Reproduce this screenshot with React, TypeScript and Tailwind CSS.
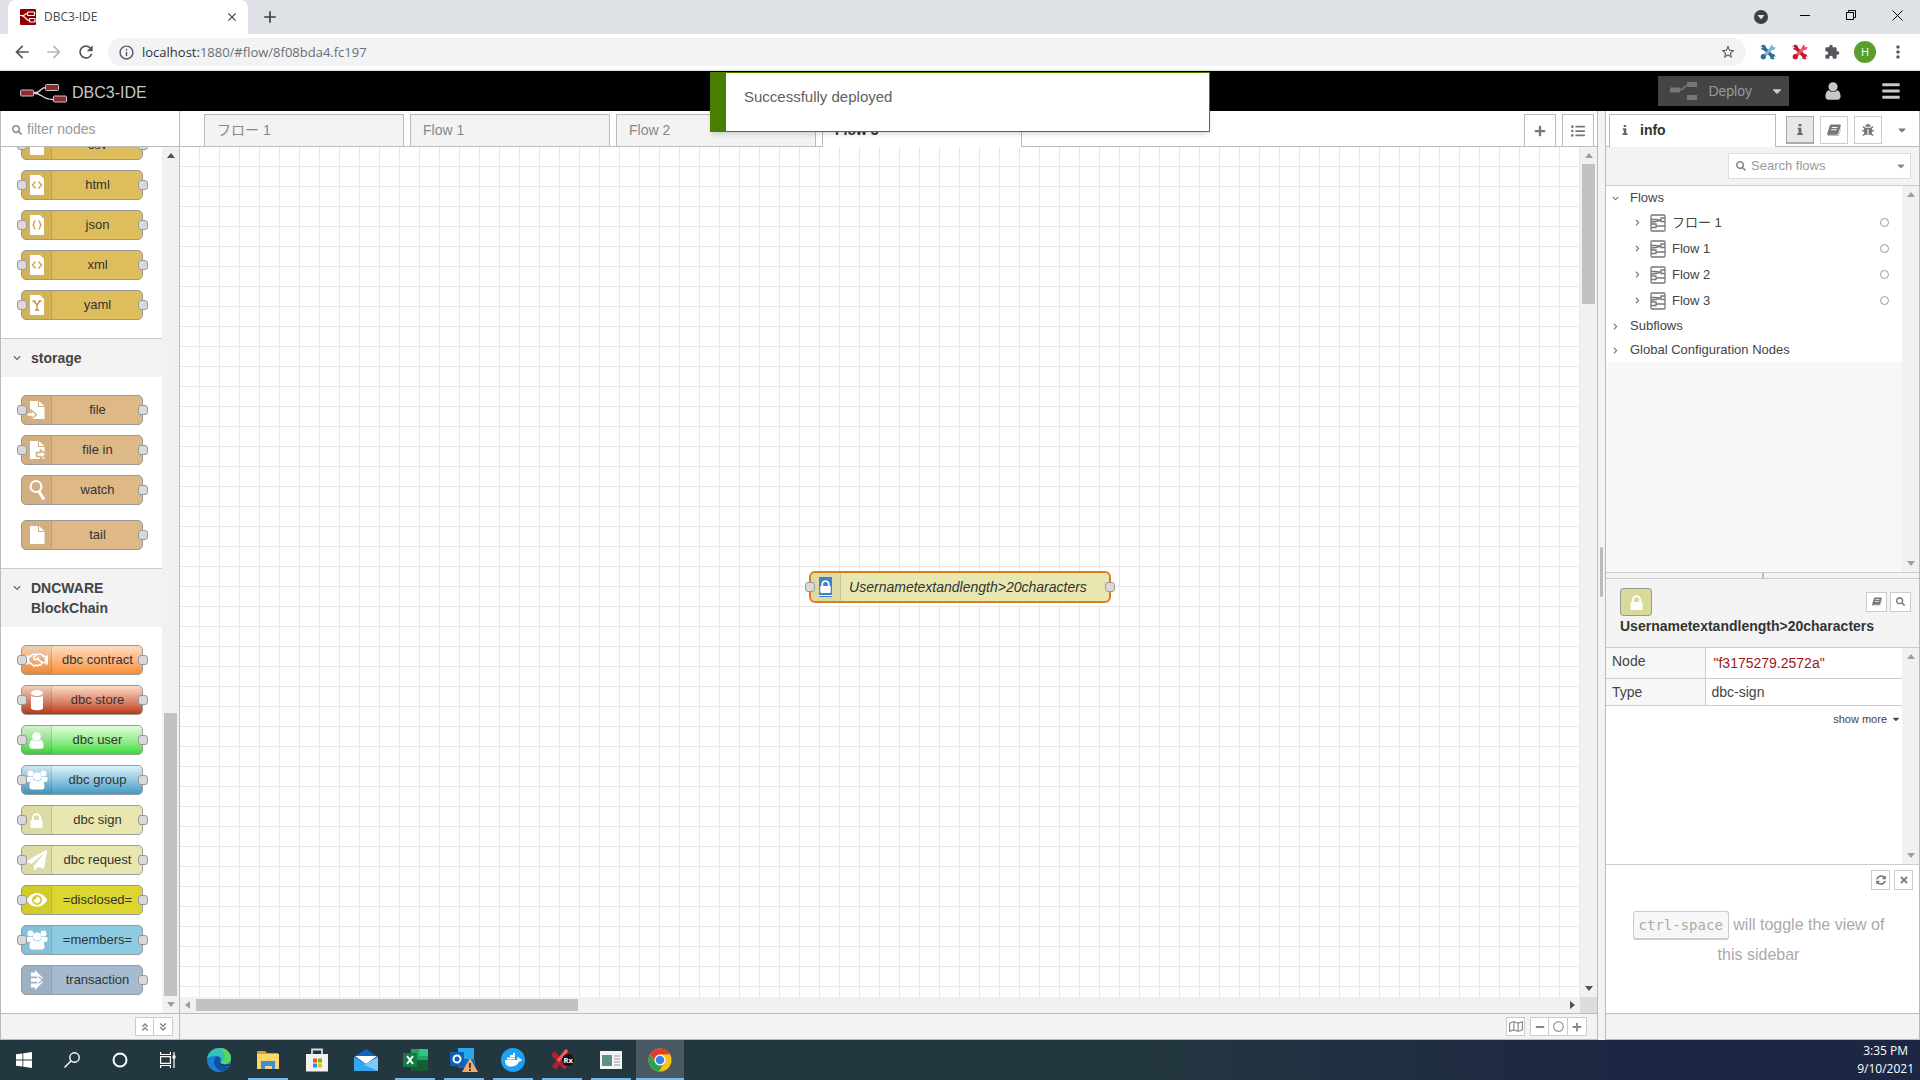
import React from "react";
import {
  FaBug, FaCaretDown, FaChevronDown, FaChevronRight, FaEye,
  FaListUl, FaMinus, FaPaperPlane, FaPlus, FaRegHandshake, FaRegMap, FaSearch, FaSyncAlt,
  FaTimes, FaAngleDoubleDown, FaAngleDoubleUp, FaBars, FaRegCircle,
} from "react-icons/fa";
import { MdArrowBack, MdArrowForward, MdRefresh, MdStarBorder, MdMoreVert, MdClose, MdAdd, MdInfoOutline, MdExtension } from "react-icons/md";

const sans = "font-['Liberation_Sans','Noto_Sans_CJK_JP',sans-serif]";
const ui = "font-['Open_Sans','Noto_Sans',sans-serif]";

/* ---------- shared glyphs ---------- */

function Lock({ className }: { className?: string }) {
  return (
    <svg viewBox="0 0 1152 1536" className={className} fill="currentColor">
      <path d="M320 768h512v-192q0-106-75-181t-181-75-181 75-75 181v192zm832 96v576q0 40-28 68t-68 28h-960q-40 0-68-28t-28-68v-576q0-40 28-68t68-28h32v-192q0-184 132-316t316-132 316 132 132 316v192h32q40 0 68 28t28 68z" />
    </svg>
  );
}

function Person({ className }: { className?: string }) {
  return (
    <svg viewBox="0 0 16 18" className={className} fill="currentColor">
      <circle cx="8" cy="4.8" r="4.6" />
      <path d="M4 8.2C1.4 8.6.4 11.6.4 14.6c0 2 1.2 3.2 3 3.2h9.2c1.8 0 3-1.2 3-3.2 0-3-1-6-3.6-6.4C11 9.300 9.600 9.900 8 9.900S5 9.300 4 8.200z" />
    </svg>
  );
}

function InfoGlyph({ className }: { className?: string }) {
  return (
    <svg viewBox="0 0 6 12" className={className} fill="currentColor">
      <path d="M1.500 0h3v2.500h-3zM.5 4h4v6H6v2H0v-2h1.500V6H.5z" />
    </svg>
  );
}

function Book({ className }: { className?: string }) {
  return (
    <svg viewBox="0 0 14 12" className={className} fill="currentColor">
      <path d="M4.500.5h8.200c.8 0 1.200.6 1 1.400l-2.300 7.600c-.2.800-.8 1.200-1.500 1.200H2.300c-.6 0-.9.300-.9.300s.3.500 1 .5h8.200c.7 0 1.200-.3 1.400-1L14 4v1l-1.800 6c-.3.700-.9 1-1.600 1H2.300C.8 12-.1 10.700.3 9.500L2.600 2C2.900 1 3.600.5 4.500.5zM5 3l-.3 1h5.600l.3-1zM4.300 5.200 4 6.200h5.600l.3-1z" fillRule="evenodd" />
    </svg>
  );
}

function Arrow({ dir, className }: { dir: "up" | "down" | "left" | "right"; className?: string }) {
  const d = { up: "M0 6 4 1l4 5z", down: "M0 2l4 5 4-5z", left: "M6 0 1 4l5 4z", right: "M2 0l5 4-5 4z" }[dir];
  return (
    <svg viewBox="0 0 8 8" className={"h-2 w-2 shrink-0 " + (className ?? "text-[#a0a0a0]")} fill="currentColor">
      <path d={d} />
    </svg>
  );
}

function FlowGlyph() {
  return (
    <svg viewBox="0 0 16 18" className="h-[18px] w-4 shrink-0" fill="none" stroke="#777" strokeWidth="1.300">
      <rect x="1" y="1" width="14" height="16" rx="1" />
      <path d="M15 4h-4v3.500h4M1 10h5v3.500H1M1 5.500h3.500C8 5.500 7 6 10.500 6M6.500 12H15M1 8c5 0 5-.5 9-1.500" />
    </svg>
  );
}

/* ---------- browser ---------- */

function Cross({ a, b }: { a: string; b: string }) {
  return (
    <svg viewBox="0 0 16 16" className="h-4 w-4">
      <path d="M4 4 12 12" stroke={a} strokeWidth="3.500" />
      <path d="M12 4 4 12" stroke={b} strokeWidth="3" />
      <g fill={a}><circle cx="3.300" cy="3.300" r="2.600" /><circle cx="12.700" cy="12.700" r="2.600" /></g>
      <g fill={b}><circle cx="12.700" cy="3.300" r="2.600" /></g>
      <circle cx="3.300" cy="12.700" r="2.600" fill={a} />
      <g fill="#fff"><circle cx="14" cy="1.700" r="1.500" /><circle cx="1.500" cy="3.500" r="1" /><circle cx="14.500" cy="13.500" r="1" /></g>
    </svg>
  );
}

function Browser() {
  return (
    <div className={ui}>
      <div className="flex h-[34px] bg-[#dee1e6]">
        <div className="ml-2 flex w-60 items-center rounded-t-lg bg-white pr-[9px] pl-3 text-[12px] text-[#45494d]">
          <svg viewBox="0 0 16 16" className="mr-2 h-4 w-4">
            <rect width="16" height="16" rx="1" fill="#8f0000" />
            <g fill="none" stroke="#fff" strokeWidth="1.200">
              <rect x="7.500" y="3" width="7" height="3.500" rx=".8" />
              <rect x="9.500" y="9.500" width="5.500" height="3.500" rx=".8" />
              <path d="M0 6.500h2c3 0 3-2 5.500-2M2 7c4 0 3 4.500 7.500 4.500" />
            </g>
          </svg>
          <span className="flex-1">DBC3-IDE</span>
          <button aria-label="Close tab"><MdClose className="h-[14px] w-[14px] text-[#3c4043]" /></button>
        </div>
        <button aria-label="New tab" className="ml-3 text-[#3c4043]"><MdAdd className="h-5 w-5" /></button>
        <div className="ml-auto flex items-center pb-1">
          <svg viewBox="0 0 14 14" className="mr-6 mt-1 h-[14px] w-[14px]"><circle cx="7" cy="7" r="7" fill="#3c4043" /><path d="M3.500 5h7L7 9.500z" fill="#dee1e6" /></svg>
          <button aria-label="Minimize" className="mx-2"><svg viewBox="0 0 10 10" className="h-[10px] w-[10px]"><path d="M0 5.500h10" stroke="#000" /></svg></button>
          <button aria-label="Restore" className="mx-7"><svg viewBox="0 0 10 10" className="h-[10px] w-[10px]" fill="none" stroke="#000"><path d="M.5 2.500h7v7h-7zM2.500 2.500v-2h7v7h-2" /></svg></button>
          <button aria-label="Close" className="mr-[17px] ml-2"><svg viewBox="0 0 11 11" className="h-[11px] w-[11px]" stroke="#000"><path d="m.5.5 10 10M10.500.5l-10 10" /></svg></button>
        </div>
      </div>
      <div className="flex h-[37px] items-center border-b border-[#dcdcdc] bg-white pl-3 text-[#54585c]">
        <button aria-label="Back"><MdArrowBack className="h-5 w-5" /></button>
        <button aria-label="Forward" className="ml-3"><MdArrowForward className="h-5 w-5 text-[#b5b7ba]" /></button>
        <button aria-label="Reload" className="ml-3"><MdRefresh className="h-5 w-5" /></button>
        <div className="ml-3 flex h-7 flex-1 items-center rounded-full bg-[#f1f3f4] px-2">
          <MdInfoOutline className="ml-[2px] h-[17px] w-[17px]" />
          <span className="ml-[7px] flex-1 pt-px text-[13px] text-[#6b6f73]"><span className="text-[#303134]">localhost:</span>1880/#flow/8f08bda4.fc197</span>
          <button aria-label="Bookmark"><MdStarBorder className="mr-[2px] h-4 w-4" /></button>
        </div>
        <div className="mr-3 ml-[14px] flex items-center">
          <Cross a="#2f6d92" b="#79b4cc" />
          <span className="ml-4 flex"><Cross a="#c3152b" b="#e5525c" /></span>
          <MdExtension className="ml-4 h-4 w-4" />
          <span className="ml-[14px] flex h-[22px] w-[22px] items-center justify-center rounded-full bg-[#5a9e2c] text-[11px] text-white">H</span>
          <button aria-label="Menu" className="ml-3"><MdMoreVert className="h-5 w-5" /></button>
        </div>
      </div>
    </div>
  );
}

/* ---------- header ---------- */

function Header() {
  return (
    <header className="relative flex h-10 shrink-0 items-center bg-black">
      <svg viewBox="0 0 48 20" className="mt-1 ml-5 h-5 w-12" fill="none">
        <path d="M13 10c9 0 6-5.500 13-5.500M13 10c10 0 8 6.500 20 6.500" stroke="#ddd" strokeWidth="1.300" />
        <g fill="#8f2b2e" stroke="#c9c9c9">
          <rect x=".6" y="7" width="13" height="6" rx="1" />
          <rect x="25.500" y="1.500" width="13" height="6" rx="1" />
          <rect x="33.500" y="13" width="13" height="6" rx="1" />
        </g>
      </svg>
      <h1 className="mt-1 ml-1 text-[16px] text-[#c7c7c7]">DBC3-IDE</h1>
      <button className="ml-auto flex h-[30px] items-center bg-[#444] pl-3 text-[14px] text-[#999]">
        <svg viewBox="0 0 28 20" className="mr-[10px] h-5 w-7" fill="#777">
          <path d="M9 9c7 0 4-5 9-5" stroke="#777" strokeWidth="1.500" fill="none" />
          <rect y="6.500" width="10" height="5" /><rect x="17" y="1" width="10" height="5" /><rect x="17" y="14" width="10" height="5" />
        </svg>
        Deploy
      </button>
      <button aria-label="Deploy options" className="flex h-[30px] w-[37px] items-center justify-end bg-[#444] pr-1 text-[#ccc]"><FaCaretDown className="h-[14px] w-4" /></button>
      <button aria-label="User" className="ml-9 text-[#c7c7c7]"><Person className="h-[18px] w-4" /></button>
      <button aria-label="Main menu" className="mr-[19px] ml-10 text-[#c7c7c7]"><FaBars className="h-5 w-5" /></button>
      <div role="status" className="absolute top-[1px] left-1/2 z-20 h-[60px] w-[500px] -translate-x-1/2 border border-l-[16px] border-[#487f00] bg-white px-[18px] pt-[13px] text-[15px] text-[#5f5f5f] shadow-md">
        Successfully deployed
      </div>
    </header>
  );
}

/* ---------- palette ---------- */

type Kind = { label: string; tint: string; icon: React.ReactNode; input?: boolean; top?: string };

const sheet = (glyph: React.ReactNode) => (
  <svg viewBox="0 0 16 22" className="h-[22px] w-4" fill="none">
    <path d="M1 1h10l4 4v16H1z" fill="#fff" />
    {glyph}
  </svg>
);
const angle = sheet(<path d="M6.500 7.500 3.500 11l3 3.500m3-7 3 3.500-3 3.500" stroke="#c9a64c" strokeWidth="1.400" />);
const brace = sheet(<path d="M6.500 7c-2.500 0-.5 3.500-2.800 4 2.300.5.3 4 2.800 4m3-8c2.500 0 .5 3.500 2.800 4-2.300.5-.3 4-2.800 4" stroke="#d9924c" strokeWidth="1.300" />);
const wye = sheet(<path d="M3.500 7h3m3 0h3M5 7l3 4 3-4m-3 4v5m-2 0h4" stroke="#c98a3c" strokeWidth="1.300" />);
const page = (glyph?: React.ReactNode) => (
  <svg viewBox="0 0 20 20" className="h-5 w-5">
    <path d="M3 1h8v6h6.500v12H3zM12 1l5.500 5H12z" fill="#fff" />
    {glyph}
  </svg>
);
const group = (
  <svg viewBox="0 0 22 20" className="h-5 w-[22px]" fill="#fff">
    <circle cx="4.500" cy="3.500" r="3" /><circle cx="17.500" cy="3.500" r="3" />
    <path d="M1 7h6v5H2.500C1 12 .3 10.500.3 9zM21 7h-6v5h4.500c1.500 0 2.200-1.500 2.200-3z" />
    <circle cx="11" cy="6.500" r="4" />
    <path d="M7.500 10C4.500 10 3.500 13.500 3.500 17c0 1.500 1 2.500 2.500 2.500h10c1.500 0 2.500-1 2.500-2.500 0-3.500-1-7-4-7-2 1.500-5 1.500-7 0z" />
  </svg>
);

const parsers: Kind[] = [
  { label: "csv", tint: "bg-[#debd5c]", icon: sheet(null), input: true },
  { label: "html", tint: "bg-[#debd5c]", icon: angle, input: true },
  { label: "json", tint: "bg-[#debd5c]", icon: brace, input: true },
  { label: "xml", tint: "bg-[#debd5c]", icon: angle, input: true },
  { label: "yaml", tint: "bg-[#debd5c]", icon: wye, input: true },
];
const storage: Kind[] = [
  { label: "file", tint: "bg-[#deb887]", input: true, icon: page(<path d="M0 12.500h4V10l5.500 4.500L4 19v-2.500H0z" fill="#fff" stroke="#d3ad7d" strokeWidth="1.500" />) },
  { label: "file in", tint: "bg-[#deb887]", input: true, icon: page(<path d="M9.500 12.500h4V10l5.500 4.500-5.500 4.500v-2.500h-4z" fill="#fff" stroke="#d3ad7d" strokeWidth="1.500" />) },
  { label: "watch", tint: "bg-[#deb887]", icon: <svg viewBox="0 0 18 22" className="h-[22px] w-[18px]" fill="none" stroke="#fff"><circle cx="8" cy="7.500" r="5.500" strokeWidth="2" /><path d="m11 12.500 5 8" strokeWidth="3" /></svg> },
  { label: "tail", tint: "bg-[#deb887]", icon: page(), top: "mt-[5px]" },
];
const chain: Kind[] = [
  { label: "dbc contract", tint: "bg-linear-to-b from-[#fbdcc0] to-[#f88f30]", input: true, icon: <FaRegHandshake className="h-[22px] w-[22px]" /> },
  { label: "dbc store", tint: "bg-linear-to-b from-[#fadcc8] to-[#b93a16]", input: true, icon: <svg viewBox="0 0 14 22" className="h-[22px] w-[14px]" fill="#fff"><ellipse cx="7" cy="4" rx="6" ry="3" /><path d="M1 6.500c2 2 10 2 12 0V19c0 3-12 3-12 0z" /></svg> },
  { label: "dbc user", tint: "bg-linear-to-b from-[#e0fddc] to-[#32dc32]", input: true, icon: <Person className="h-[17px] w-[15px]" /> },
  { label: "dbc group", tint: "bg-linear-to-b from-[#dcf4fc] to-[#3c9cc4]", input: true, icon: group },
  { label: "dbc sign", tint: "bg-[#e8e7af]", input: true, icon: <Lock className="h-4 w-[13px]" /> },
  { label: "dbc request", tint: "bg-[#e8e7af]", input: true, icon: <FaPaperPlane className="h-5 w-5" /> },
  { label: "=disclosed=", tint: "bg-[#ded630]", input: true, icon: <FaEye className="h-5 w-5" /> },
  { label: "=members=", tint: "bg-[#8ccbe2]", input: true, icon: group },
  { label: "transaction", tint: "bg-[#a6bbcf]", icon: <svg viewBox="0 0 14 20" className="h-5 w-[14px]" fill="#fff"><path d="M1 8.200h6v3.600H1zM1 2.500h4V0l7.500 7.500V9L9 6.500H1zM1 17.500h4V20l7.500-7.500V11L9 13.500H1zM7 6l4.500 4L7 14z" /></svg> },
];

const port = "absolute h-[10px] w-[10px] rounded-[3px] border border-[#999] bg-[#d9d9d9]";

function PaletteNode({ kind }: { kind: Kind }) {
  return (
    <div className={"relative mr-[19px] ml-5 flex h-[30px] shrink-0 cursor-move rounded-[5px] border border-[#999] " + kind.tint + " " + (kind.top ?? "")}>
      <span className="flex w-[30px] shrink-0 items-center justify-center rounded-l-[4px] border-r border-black/10 bg-black/5 text-white">{kind.icon}</span>
      <span className="flex flex-1 items-center justify-center whitespace-nowrap pl-px text-[13px] text-[#333]">{kind.label}</span>
      {kind.input && <i className={port + " top-[9px] -left-[5px]"} />}
      <i className={port + " top-[9px] -right-[6px]"} />
    </div>
  );
}

function Category({ title, kinds }: { title: string; kinds: Kind[] }) {
  return (
    <section className="border-t border-[#ccc]">
      <button className="flex w-full items-start bg-[#f3f3f3] py-[9px] pl-3 text-left text-[14px] leading-5 font-bold text-[#444]">
        <FaChevronDown className="mt-[6px] mr-[10px] h-2 w-2 shrink-0 text-[#666]" />
        <span className="w-24">{title}</span>
      </button>
      <div className="flex flex-col gap-[10px] pt-[18px] pb-[18px]">
        {kinds.map((k) => <PaletteNode key={k.label} kind={k} />)}
      </div>
    </section>
  );
}

function Palette() {
  return (
    <aside className="flex w-[180px] shrink-0 flex-col border-x border-[#bbb] bg-white">
      <label className="flex h-9 shrink-0 items-center border-b border-[#bbb] pt-[2px] pl-[11px] text-[#888]">
        <FaSearch className="mr-[5px] h-[10px] w-[10px]" />
        <input placeholder="filter nodes" className="w-32 text-[14px] outline-none placeholder:text-[#999]" />
      </label>
      <div className="flex min-h-0 flex-1">
        <div className="min-w-0 flex-1 overflow-hidden">
          <div className="-mt-[17px] flex flex-col gap-[10px] pb-[18px]">
            {parsers.map((k) => <PaletteNode key={k.label} kind={k} />)}
          </div>
          <Category title="storage" kinds={storage} />
          <Category title="DNCWARE BlockChain" kinds={chain} />
        </div>
        <div className="flex w-[17px] flex-col items-center bg-[#f1f1f1] py-[5px]">
          <Arrow dir="up" className="text-[#505050]" />
          <div className="flex-[554]" />
          <div className="w-[13px] flex-[284] bg-[#c1c1c1]" />
          <Arrow dir="down" className="mt-1 text-[#a0a0a0]" />
        </div>
      </div>
      <footer className="flex h-[27px] shrink-0 items-center justify-end border-y border-[#bbb] bg-[#f3f3f3] pr-[6px]">
        <button aria-label="Collapse all" className="flex h-[19px] w-[19px] items-center justify-center border border-[#ccc] bg-white text-[#888]"><FaAngleDoubleUp className="h-[10px] w-[10px]" /></button>
        <button aria-label="Expand all" className="-ml-px flex h-[19px] w-5 items-center justify-center border border-[#ccc] bg-white text-[#888]"><FaAngleDoubleDown className="h-[10px] w-[10px]" /></button>
      </footer>
    </aside>
  );
}

/* ---------- workspace ---------- */

const flows = ["フロー 1", "Flow 1", "Flow 2", "Flow 3"];
const tool = "flex h-[19px] items-center justify-center border border-[#ccc] bg-white text-[#888]";

function Workspace() {
  return (
    <main className="flex min-w-0 flex-1 flex-col border-r border-[#bbb] bg-white">
      <nav className="flex h-9 shrink-0 items-end border-b border-[#bbb] pl-6">
        {flows.map((f, i) => (
          <button
            key={f}
            className={"mr-[6px] h-8 w-[200px] border border-b-0 border-[#bbb] px-3 text-left text-[14px] " +
              (i === 3 ? "-mb-px h-[33px] bg-white pb-px font-bold text-[#333]" : "bg-[#f3f3f3] text-[#888]")}
          >
            {f}
          </button>
        ))}
        <button aria-label="Add flow" className="ml-auto flex h-8 w-8 items-center justify-center border border-b-0 border-[#bbb] text-[#777]"><FaPlus className="h-3 w-3" /></button>
        <button aria-label="List flows" className="mr-[3px] ml-[6px] flex h-8 w-8 items-center justify-center border border-b-0 border-[#bbb] text-[#777]"><FaListUl className="h-[14px] w-[14px]" /></button>
      </nav>
      <div className="flex min-h-0 flex-1">
        <div className="flex min-w-0 flex-1 flex-col">
          <div className="relative flex-1 overflow-hidden bg-[linear-gradient(to_left,#e9e9e9_1px,transparent_1px),linear-gradient(to_top,#e9e9e9_1px,transparent_1px)] bg-size-[20px_20px]">
            <div className="absolute top-[424px] left-[629px] flex h-8 w-[302px] items-center rounded-[6px] border-2 border-[#e07b20] bg-[#e8e7af]">
              <span className="flex h-full w-[30px] items-center justify-center rounded-l-[4px] border-r border-black/10 bg-black/5 text-white">
                <span className="flex h-5 w-[13px] flex-col items-center justify-between bg-[#3f7fd0] pt-[2px]"><Lock className="h-[14px] w-[11px]" /><i className="h-[2px] w-full border-t border-white" /></span>
              </span>
              <span className="flex-1 pr-[14px] text-center text-[14px] text-[#333] italic">Usernametextandlength&gt;20characters</span>
              <i className={port + " top-[9px] -left-[6px]"} />
              <i className={port + " top-[9px] -right-[6px]"} />
            </div>
          </div>
          <div className="flex h-4 shrink-0 items-center bg-[#f1f1f1] px-1">
            <Arrow dir="left" />
            <div className="ml-1 h-3 flex-[382] bg-[#c1c1c1]" />
            <div className="flex-[990]" />
            <Arrow dir="right" className="text-[#505050]" />
          </div>
        </div>
        <div className="flex w-[17px] flex-col items-center bg-[#f1f1f1] pt-[5px]">
          <Arrow dir="up" />
          <div className="mt-1 w-[13px] flex-[140] bg-[#c1c1c1]" />
          <div className="flex-[680]" />
          <Arrow dir="down" className="mb-[5px] text-[#505050]" />
          <div className="h-4 w-full bg-[#dcdcdc]" />
        </div>
      </div>
      <footer className="flex h-[27px] shrink-0 items-center justify-end border-y border-[#bbb] bg-[#f3f3f3] pr-[10px]">
        <button aria-label="Toggle navigator" className={tool + " mr-[5px] w-[19px]"}><FaRegMap className="h-[13px] w-[14px]" /></button>
        <button aria-label="Zoom out" className={tool + " w-[19px]"}><FaMinus className="h-[10px] w-[10px]" /></button>
        <button aria-label="Reset zoom" className={tool + " -ml-px w-5"}><FaRegCircle className="h-[11px] w-[11px]" /></button>
        <button aria-label="Zoom in" className={tool + " -ml-px w-5"}><FaPlus className="h-[10px] w-[10px]" /></button>
      </footer>
    </main>
  );
}

/* ---------- sidebar ---------- */

function TreeRow({ label, open }: { label: string; open?: boolean }) {
  const Icon = open ? FaChevronDown : FaChevronRight;
  return (
    <button className="flex h-6 w-full items-center pl-[6px] text-left">
      <Icon className="mr-[11px] h-[7px] w-[7px] text-[#777]" />
      {label}
    </button>
  );
}

function Rail() {
  return (
    <div className="flex w-[17px] shrink-0 flex-col items-center justify-between bg-[#f1f1f1] py-[5px]">
      <Arrow dir="up" />
      <Arrow dir="down" />
    </div>
  );
}

function Sidebar() {
  const tab = "ml-[6px] flex h-7 w-7 items-center justify-center border border-[#ccc] text-[#777]";
  const small = "flex h-5 items-center justify-center border border-[#ccc] bg-white text-[#777]";
  return (
    <aside className="flex w-[315px] shrink-0 flex-col border-x border-[#bbb] bg-white text-[13px] text-[#444]">
      <div className="flex h-9 shrink-0 items-end border-b border-[#bbb] pl-[3px]">
        <button className="-mb-px flex h-[33px] w-[167px] items-center border border-b-0 border-[#bbb] bg-white pb-[2px] pl-3 text-[14px] font-bold text-[#333]">
          <InfoGlyph className="mr-3 h-[10px] w-[6px] text-[#666]" />info
        </button>
        <div className="mb-[2px] ml-1 flex flex-1">
          <button aria-label="Information" className="ml-[6px] flex h-7 w-7 items-center justify-center border border-b-2 border-[#aaa] bg-[#e8e8e8] text-[#666]"><InfoGlyph className="h-[11px] w-[6px]" /></button>
          <button aria-label="Help" className={tab}><Book className="h-3 w-[14px]" /></button>
          <button aria-label="Debug messages" className={tab}><FaBug className="h-3 w-3" /></button>
          <button aria-label="More tabs" className="mr-[11px] ml-auto text-[#777]"><FaCaretDown className="h-3 w-3" /></button>
        </div>
      </div>
      <div className="flex h-[39px] shrink-0 items-center justify-end border-b border-[#ccc] bg-[#f3f3f3] pr-2">
        <label className="flex h-[26px] w-[183px] items-center border border-[#ddd] bg-white px-[7px] text-[#888]">
          <FaSearch className="mr-[5px] h-[10px] w-[10px] shrink-0" />
          <input placeholder="Search flows" className="min-w-0 flex-1 text-[13px] outline-none placeholder:text-[#999]" />
          <FaCaretDown className="-mr-1 h-3 w-3 shrink-0" />
        </label>
      </div>
      <div className="flex flex-[385] basis-0 bg-[#f7f7f7]">
        <div className="flex-1">
          <div className="bg-white">
            <TreeRow label="Flows" open />
            {flows.map((f) => (
              <div key={f} className="flex h-[26px] items-center pr-[13px] pb-px pl-7">
                <FaChevronRight className="mr-[9px] h-[7px] w-[7px] text-[#777]" />
                <FlowGlyph />
                <span className="ml-[6px] flex-1">{f}</span>
                <button aria-label={"Toggle " + f} className="h-[9px] w-[9px] rounded-full border border-[#999]" />
              </div>
            ))}
            <TreeRow label="Subflows" />
            <TreeRow label="Global Configuration Nodes" />
          </div>
        </div>
        <Rail />
      </div>
      <div className="flex h-[7px] shrink-0 items-center justify-center border-y border-[#ccc] bg-[#f3f3f3]"><i className="h-[5px] w-[2px] bg-[#bbb]" /></div>
      <div className="flex h-[69px] shrink-0 flex-col border-b border-[#ccc] bg-[#f3f3f3] pt-[9px] pr-2 pl-[14px]">
        <div className="flex items-center">
          <span className="flex h-7 w-8 items-center justify-center rounded-[3px] border border-[#999] bg-[#d9da9a] text-white"><Lock className="h-4 w-[13px]" /></span>
          <button aria-label="Show help" className={small + " ml-auto w-[21px]"}><Book className="h-[9px] w-[10px]" /></button>
          <button aria-label="Find node" className={small + " ml-[3px] w-[21px]"}><FaSearch className="h-[9px] w-[9px]" /></button>
        </div>
        <h2 className="text-[14px] font-bold text-[#333]">Usernametextandlength&gt;20characters</h2>
      </div>
      <div className="flex flex-[216] basis-0">
        <div className="flex-1">
          <table className="w-full text-[14px]">
            <tbody>
              <tr className="h-[31px] border-b border-[#ccc]"><th className="w-[99px] border-r border-[#ccc] bg-[#f7f7f7] pb-[2px] pl-[6px] text-left font-normal">Node</th><td className="pt-[2px] pl-2 text-[#a31515]">"f3175279.2572a"</td></tr>
              <tr className="h-[27px] border-b border-[#ccc]"><th className="border-r border-[#ccc] bg-[#f7f7f7] pl-[6px] text-left font-normal">Type</th><td className="pl-[6px]">dbc-sign</td></tr>
            </tbody>
          </table>
          <button className="mt-[5px] ml-auto flex items-center pr-px text-[11px]">show more <FaCaretDown className="ml-1 h-[10px] w-[10px]" /></button>
        </div>
        <Rail />
      </div>
      <div className="h-[149px] shrink-0 border-t border-[#ccc] px-[6px] pt-[5px]">
        <div className="flex justify-end gap-1">
          <button aria-label="Next tip" className={small + " w-[19px]"}><FaSyncAlt className="h-[10px] w-[10px]" /></button>
          <button aria-label="Close tips" className={small + " w-[19px]"}><FaTimes className="h-[10px] w-[10px]" /></button>
        </div>
        <p className="pt-5 pr-5 pl-3 text-center text-[16px] leading-[30px] text-[#aaa]">
          <kbd className="rounded-[3px] border border-b-2 border-[#ccc] bg-[#f7f7f7] px-[5px] py-[5px] font-['DejaVu_Sans_Mono',monospace] text-[14px]">ctrl-space</kbd> will toggle the view of this sidebar
        </p>
      </div>
      <div className="h-[27px] shrink-0 border-y border-[#bbb] bg-[#f3f3f3]" />
    </aside>
  );
}

/* ---------- taskbar ---------- */

const big = "h-6 w-6";
const pinned: { name: string; state?: "open" | "active"; icon: React.ReactNode }[] = [
  { name: "Edge", icon: (
    <svg viewBox="0 0 24 24" className={big}>
      <circle cx="12" cy="12" r="12" fill="#1b7fd6" />
      <path d="M0 11C1 4 6 0 12 0c7 0 12 5 12 10 0 4-3 6-6 6-3 0-4-1-4-2 1-1 1-6-5-6-4 0-8 1-9 3z" fill="#35c1b5" />
      <path d="M13 0c7 0 11 5 11 10 0 4-3 6-6 6-3 0-4-1-4-2 6-2 4-10-1-14z" fill="#5bd35f" />
      <path d="M9 9c-4 4-1 13 6 14 4-.5 6-2 8-5-4 2-10 1-11-3-.4-2 1-3 2-4-1-2-3-3-5-2z" fill="#0f4f9e" />
      <path d="M14 11c-2 1-2 3-1 4 2 2 6 2 9 1l1 1-2 1c-4 1-8 0-9-3 0-2 0-3 2-4z" fill="#23363f" />
    </svg>) },
  { name: "File Explorer", state: "open", icon: (
    <svg viewBox="0 0 24 24" className={big}><path d="M1 3h8l2 2h11v3H1z" fill="#d9a02a" /><path d="M1 6h22v15H1z" fill="#fcd667" /><path d="M5 13h14v8h-3v-3H9v3H5z" fill="#3f8ede" /></svg>) },
  { name: "Microsoft Store", icon: (
    <svg viewBox="0 0 24 24" className={big}><path d="M7 7V1.500h10V7" fill="none" stroke="#d8dde0" strokeWidth="1.800" /><path d="M1 6h22v17.500H1z" fill="#f2f2f2" /><path d="M8 10.500h4v4H8z" fill="#f25022" /><path d="M13 10.500h4v4h-4z" fill="#7fba00" /><path d="M8 15.500h4v4H8z" fill="#00a4ef" /><path d="M13 15.500h4v4h-4z" fill="#ffb900" /></svg>) },
  { name: "Mail", icon: (
    <svg viewBox="0 0 24 24" className={big}><path d="m12 1 12 8v14H0V9z" fill="#1466b8" /><path d="M1 8h22l-11 8z" fill="#fff" /><path d="m0 9 12 7 12-7v14H0z" fill="#35a5ee" /><path d="m24 9-14 8 14 6z" fill="#7cc8f7" /></svg>) },
  { name: "Excel", state: "open", icon: (
    <svg viewBox="0 0 26 24" className="h-6 w-[26px]"><path d="M9 1h17v22H9z" fill="#21a366" /><path d="M17 1h9v7h-9z" fill="#33c481" /><path d="M9 12h17v11H9z" fill="#185c37" /><path d="M1 5h14v14H1z" fill="#107c41" /><path d="m5 8 6 8m0-8-6 8" stroke="#fff" strokeWidth="2" /></svg>) },
  { name: "Outlook", state: "open", icon: (
    <svg viewBox="0 0 28 26" className="h-[26px] w-7"><path d="M8 1h16v18H8z" fill="#28a8ea" /><path d="M8 12h17v9H8z" fill="#1466c0" /><path d="M0 5h14v14H0z" fill="#0f5fb5" /><circle cx="7" cy="12" r="3.500" fill="none" stroke="#fff" strokeWidth="2" /><path d="m20 11 8 14H12z" fill="#efac6b" /><path d="M20 16v5m0 1v2" stroke="#333" strokeWidth="1.800" /></svg>) },
  { name: "Docker", state: "open", icon: (
    <svg viewBox="0 0 24 24" className={big}><circle cx="12" cy="12" r="12" fill="#1da1f2" /><path d="M4 12h12c1-1 .5-2 0-3 2 0 2.500 1 3 2h2c-.5 2-2 2.500-3 2.500C16 18 13 18.500 10 18.500c-4 0-6-2-6-6.500z" fill="#fff" /><path d="M6 9.500h8v2H6zM9 7h5v2H9zM12 5h2v2h-2z" fill="#fff" /></svg>) },
  { name: "Rx", state: "open", icon: (
    <svg viewBox="0 0 24 24" className={big}><path d="M3 5l13 15M17 3 4 20" stroke="#b81f2c" strokeWidth="5" /><path d="M17 2 8 13" stroke="#f0606a" strokeWidth="3" /><circle cx="18" cy="12" r="6" fill="#111" /><text x="13.500" y="15" fontSize="7.500" fontWeight="700" fill="#fff">Rx</text></svg>) },
  { name: "Window", state: "open", icon: (
    <svg viewBox="0 0 24 24" className={big}><path d="M1 3h22v18H1z" fill="#f4f4f4" /><path d="M3 7h10v11H3z" fill="#5c9484" /><path d="M15 8h6m-6 3h6m-6 3h6m-6 3h6" stroke="#999" /></svg>) },
  { name: "Chrome", state: "active", icon: (
    <svg viewBox="0 0 24 24" className={big}><circle cx="12" cy="12" r="11.500" fill="#fbc116" /><path d="M2 6.300A11.500 11.500 0 0 1 22 6.300H12L8 14z" fill="#e33b2e" /><path d="M2 6.300A11.500 11.500 0 0 0 11 23.500l5-8.500-8 0z" fill="#2ba24c" /><circle cx="12" cy="12" r="5.500" fill="#fff" /><circle cx="12" cy="12" r="4.300" fill="#3f7de8" /></svg>) },
];

function Taskbar() {
  const cell = "flex h-10 w-12 items-center justify-center";
  return (
    <footer className={"flex h-10 shrink-0 bg-linear-to-r from-[#233740] from-60% to-[#1d2643] to-85% text-white " + ui}>
      <button aria-label="Start" className={cell}><svg viewBox="0 0 16 16" className="h-4 w-4" fill="#fff"><path d="M0 2.300 6.500 1.400v6.200H0zM7.300 1.300 16 0v7.600H7.300zM0 8.400h6.500v6.200L0 13.700zM7.300 8.400H16V16l-8.700-1.300z" /></svg></button>
      <button aria-label="Search" className={cell}><svg viewBox="0 0 16 16" className="h-4 w-4" fill="none" stroke="#fff" strokeWidth="1.400"><circle cx="10.500" cy="5.500" r="4.700" /><path d="M7 9 .5 15.500" /></svg></button>
      <button aria-label="Cortana" className={cell}><svg viewBox="0 0 16 16" className="h-4 w-4" fill="none" stroke="#fff" strokeWidth="2"><circle cx="8" cy="8" r="6.500" /></svg></button>
      <button aria-label="Task view" className={cell + " mr-[3px]"}><svg viewBox="0 0 16 16" className="h-4 w-4" fill="none" stroke="#fff" strokeWidth="1.200"><path d="M.6 4.600h9.800v6.800H.6zM.6 0v2.500h9.800V0M.6 16v-2.500h9.800V16M14 0v16" /><path d="M12.500 5h3" strokeWidth="3" /></svg></button>
      <div className="flex gap-px">
        {pinned.map((p) => (
          <button key={p.name} aria-label={p.name} className={cell + " relative" + (p.state === "active" ? " bg-[#4a5a64]" : "")}>
            {p.icon}
            {p.state && <i className={"absolute bottom-0 h-[2px] bg-[#76b9ed] " + (p.state === "active" ? "inset-x-0" : "inset-x-1")} />}
          </button>
        ))}
      </div>
      <div className="mr-[6px] ml-auto flex flex-col items-center justify-center text-[12px] leading-[18px]">
        <time>3:35 PM</time>
        <time>9/10/2021</time>
      </div>
    </footer>
  );
}

export default function App() {
  return (
    <div className={"flex h-screen flex-col overflow-hidden bg-[#f3f3f3] " + sans}>
      <Browser />
      <Header />
      <div className="flex min-h-0 flex-1">
        <Palette />
        <Workspace />
        <div className="flex w-[7px] shrink-0 items-center justify-center"><i className="-mt-2 h-[50px] w-[3px] rounded bg-[#bbb]" /></div>
        <Sidebar />
      </div>
      <Taskbar />
    </div>
  );
}
